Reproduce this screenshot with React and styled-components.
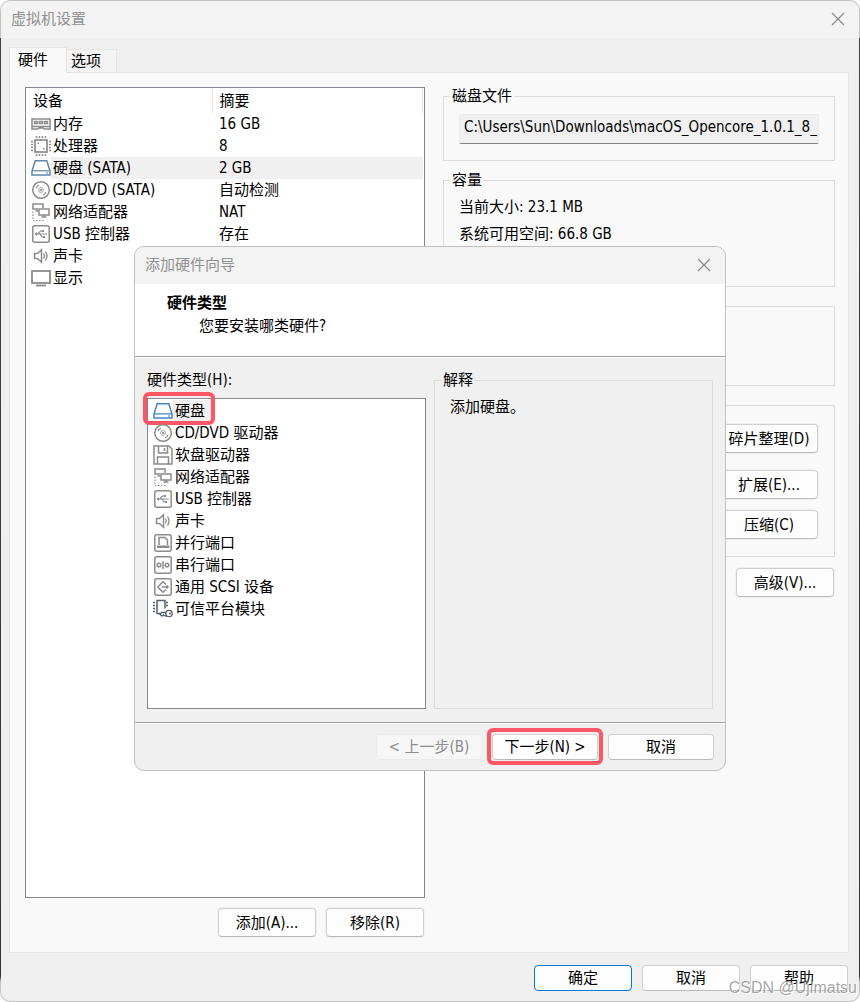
import styled, { createGlobalStyle } from "styled-components";
import { useState } from "react";

const GlobalStyle = createGlobalStyle`
  * {
    box-sizing: border-box;
  }
  body {
    margin: 0;
    background: #fff;
    color: #000;
    font-family: "DejaVu Sans Condensed", "Noto Sans CJK SC", sans-serif;
    font-size: 15px;
    line-height: 22px;
  }
  button, input, table {
    font: inherit;
    color: inherit;
  }
`;

const icons = {
  memory: (
    <>
      <path d="M1 5h18v10h-6l-1-1H8l-1 1H1zM1 12.5h18" />
      <path d="M3.500 7.500h3v2h-3zM8.500 7.500h3v2h-3zM13.500 7.500h3v2h-3z" strokeWidth="1.4" />
    </>
  ),
  cpu: (
    <>
      <rect x="4" y="4" width="12" height="12" strokeWidth="1.7" />
      <path d="M5.5 0v2M8.5 0v2M11.5 0v2M14.5 0v2M5.5 18v2M8.5 18v2M11.5 18v2M14.5 18v2M0 5.5h2M0 8.5h2M0 11.5h2M0 14.5h2M18 5.5h2M18 8.5h2M18 11.5h2M18 14.5h2" />
      <path d="M6.500 6.500h1.500v1.500H6.500zM12 12h1.500v1.500H12z" fill="currentColor" stroke="none" />
    </>
  ),
  disk: (
    <>
      <path d="M4.200 2.800h11.600l3.200 10.200v4H1v-4z" />
      <path d="M1 12.800h18" strokeWidth="1.2" />
      <path d="M15 15h2" strokeWidth="1.2" />
    </>
  ),
  cd: (
    <>
      <circle cx="10" cy="10" r="8.3" />
      <circle cx="10" cy="10" r="2.4" strokeWidth="0.8" />
      <circle cx="10" cy="10" r="1.1" fill="currentColor" stroke="none" />
      <path d="M5 8q1-2.200 3-3M15 12q-1 2.200-3 3" strokeWidth="1.3" />
    </>
  ),
  floppy: (
    <>
      <path d="M1 1h15l3 3v15H1z" />
      <path d="M5.5 1v7h9V1M4.5 19v-7h11v7M11.5 3v3" />
    </>
  ),
  network: (
    <>
      <path d="M7 7H2V2h10v4M4.5 9h3" />
      <path d="M8 7h10v6H8zM13 13v2M10.5 15h5" />
      <path d="M2 9.5v9h11" strokeWidth="1.2" strokeDasharray="1.5 1.5" />
    </>
  ),
  usb: (
    <>
      <rect x="1.8" y="1.8" width="16.4" height="16.4" rx="2" />
      <path d="M4 10h12M7 10l2.500-3h2M9 10l2 3h2" strokeWidth="1.2" />
      <path d="M6 8L3.500 10 6 12zM11 6h2v2h-2zM12 12h2v2h-2z" fill="currentColor" stroke="none" />
    </>
  ),
  sound: (
    <>
      <path d="M3.5 7.5h3l4-3.7v12.4l-4-3.7h-3z" />
      <path d="M12.5 7.5q1.6 2.5 0 5M14.5 5.5q3 4.5 0 9" strokeWidth="1.3" />
    </>
  ),
  display: (
    <>
      <rect x="1" y="3" width="18" height="12" strokeWidth="1.8" />
      <path d="M5 17.5h10" strokeWidth="1.8" />
    </>
  ),
  parallel: (
    <>
      <rect x="1.8" y="1.8" width="16.4" height="16.4" rx="2" />
      <path d="M6 12V4.5h6l2.5 2.5v5" />
      <path d="M4 12.5h12.5V15H4z" fill="currentColor" stroke="none" />
    </>
  ),
  serial: (
    <>
      <rect x="1.8" y="1.8" width="16.4" height="16.4" rx="2" />
      <circle cx="6" cy="10" r="1.8" />
      <circle cx="14" cy="10" r="1.8" />
      <path d="M10 6v8" />
    </>
  ),
  scsi: (
    <>
      <rect x="1.8" y="1.8" width="16.4" height="16.4" rx="2" />
      <path d="M13 7.5L10 4.8 4.8 10l5.2 5.2 3-2.7M9 10h6M13.5 8.5L15 10l-1.5 1.5" />
    </>
  ),
  tpm: (
    <>
      <path d="M7 14.500H4V1.500h8v8" />
      <path d="M0 3.5h2M0 6.5h2M0 9.5h2M0 12.5h2M13 3.5h2M13 6.5h2" />
      <circle cx="16" cy="14.500" r="3.2" strokeWidth="1.3" />
      <circle cx="17" cy="14.500" r="1" fill="currentColor" stroke="none" />
      <path d="M13 13.500H8.500L7 15.200l1.500 1.600h1l1-1 1 1h2" strokeWidth="1.3" />
    </>
  ),
};

const devices = [
  { icon: "memory", name: "内存", summary: "16 GB" },
  { icon: "cpu", name: "处理器", summary: "8" },
  { icon: "disk", name: "硬盘 (SATA)", summary: "2 GB", color: "#5d86a8" },
  { icon: "cd", name: "CD/DVD (SATA)", summary: "自动检测" },
  { icon: "network", name: "网络适配器", summary: "NAT" },
  { icon: "usb", name: "USB 控制器", summary: "存在" },
  { icon: "sound", name: "声卡", summary: "" },
  { icon: "display", name: "显示", summary: "" },
];

const hardwareTypes = [
  { icon: "disk", name: "硬盘", color: "#3f87c6" },
  { icon: "cd", name: "CD/DVD 驱动器" },
  { icon: "floppy", name: "软盘驱动器" },
  { icon: "network", name: "网络适配器" },
  { icon: "usb", name: "USB 控制器" },
  { icon: "sound", name: "声卡" },
  { icon: "parallel", name: "并行端口" },
  { icon: "serial", name: "串行端口" },
  { icon: "scsi", name: "通用 SCSI 设备" },
  { icon: "tpm", name: "可信平台模块", color: "#52626e" },
];

function DeviceIcon({ name, color }) {
  return (
    <Icon viewBox="0 0 20 20" $color={color} aria-hidden="true">
      {icons[name]}
    </Icon>
  );
}

function CloseButton() {
  return (
    <Close aria-label="关闭">
      <svg width="14" height="14" viewBox="0 0 14 14">
        <path d="M1 1l12 12M13 1L1 13" stroke="currentColor" strokeWidth="1.2" />
      </svg>
    </Close>
  );
}

function Wizard() {
  const [selected, setSelected] = useState(0);

  return (
    <Overlay>
      <Dialog role="dialog" aria-labelledby="wizard-title">
        <WizardTitle>
          <span id="wizard-title">添加硬件向导</span>
          <CloseButton />
        </WizardTitle>
        <Intro>
          <h2>硬件类型</h2>
          <p>您要安装哪类硬件?</p>
        </Intro>
        <WizardBody>
          <TypeColumn>
            <span id="type-label">硬件类型(H):</span>
            <TypeList role="listbox" aria-labelledby="type-label">
              {hardwareTypes.map((type, i) => (
                <TypeRow
                  key={type.name}
                  role="option"
                  aria-selected={i === selected}
                  onClick={() => setSelected(i)}
                >
                  <DeviceIcon name={type.icon} color={type.color} />
                  <TypeName $selected={i === selected}>{type.name}</TypeName>
                  {i === 0 && <TypeMark />}
                </TypeRow>
              ))}
            </TypeList>
          </TypeColumn>
          <Explain>
            <legend>解释</legend>
            <p>添加硬盘。</p>
          </Explain>
        </WizardBody>
        <WizardFooter>
          <WizardButton disabled>&lt; 上一步(B)</WizardButton>
          <Marked>
            <WizardButton>下一步(N) &gt;</WizardButton>
            <ButtonMark />
          </Marked>
          <WizardButton>取消</WizardButton>
        </WizardFooter>
      </Dialog>
    </Overlay>
  );
}

function App() {
  const [tab, setTab] = useState("硬件");

  return (
    <>
      <GlobalStyle />
      <Window>
        <TitleBar>
          <span>虚拟机设置</span>
          <CloseButton />
        </TitleBar>
        <Tabs role="tablist">
          {["硬件", "选项"].map((t) => (
            <Tab key={t} role="tab" aria-selected={tab === t} $active={tab === t} onClick={() => setTab(t)}>
              {t}
            </Tab>
          ))}
        </Tabs>
        <Panel>
          <DeviceColumn>
            <DeviceBox>
              <DeviceTable>
                <thead>
                  <tr>
                    <th>设备</th>
                    <th>摘要</th>
                  </tr>
                </thead>
                <tbody>
                  {devices.map((d, i) => (
                    <DeviceRow key={d.name} $selected={i === 2}>
                      <td>
                        <DeviceCell>
                          <DeviceIcon name={d.icon} color={d.color} />
                          <DeviceName>{d.name}</DeviceName>
                        </DeviceCell>
                      </td>
                      <td>{d.summary}</td>
                    </DeviceRow>
                  ))}
                </tbody>
              </DeviceTable>
            </DeviceBox>
            <ButtonRow>
              <Button>添加(A)...</Button>
              <Button>移除(R)</Button>
            </ButtonRow>
          </DeviceColumn>
          <Settings>
            <Group $height={74}>
              <legend id="file-label">磁盘文件</legend>
              <PathInput
                readOnly
                aria-labelledby="file-label"
                value="C:\Users\Sun\Downloads\macOS_Opencore_1.0.1_8_"
              />
            </Group>
            <Group $height={116}>
              <legend>容量</legend>
              <Stat>当前大小: 23.1 MB</Stat>
              <Stat>系统可用空间: 66.8 GB</Stat>
            </Group>
            <Box $height={80} />
            <Box $height={152}>
              <Button>碎片整理(D)</Button>
              <ButtonPair>
                <Button>扩展(E)...</Button>
                <Button>压缩(C)</Button>
              </ButtonPair>
            </Box>
            <Advanced>高级(V)...</Advanced>
          </Settings>
        </Panel>
        <Footer>
          <FooterButton $primary>确定</FooterButton>
          <FooterButton>取消</FooterButton>
          <FooterButton>帮助</FooterButton>
        </Footer>
        <Wizard />
        <Watermark>CSDN @Ujimatsu</Watermark>
      </Window>
    </>
  );
}

const Window = styled.div`
  position: relative;
  display: flex;
  flex-direction: column;
  min-height: 100vh;
  padding-bottom: 10px;
  border: 1px solid transparent;
  border-radius: 10px;
  background:
    linear-gradient(#f3f3f3 37px, #efefef 37px) padding-box,
    linear-gradient(#c4c4c4 38px, #444 38px, #333 calc(100% - 26px), #c4c4c4 calc(100% - 20px)) border-box;
`;

const TitleBar = styled.header`
  display: flex;
  align-items: center;
  justify-content: space-between;
  height: 37px;
  padding: 0 14px 2px 10px;
  color: #919191;
`;

const Close = styled.button`
  display: flex;
  padding: 0;
  border: none;
  background: none;
  color: #888;
`;

const Tabs = styled.div`
  display: flex;
  align-items: flex-end;
  height: 34px;
  padding-left: 8px;
`;

const Tab = styled.button`
  width: ${(p) => (p.$active ? "58px" : "50px")};
  height: ${(p) => (p.$active ? "26px" : "23px")};
  margin-bottom: ${(p) => (p.$active ? "-1px" : "0")};
  padding: 0 0 ${(p) => (p.$active ? "2px 8px" : "0 4px")};
  border: 1px solid #e5e5e5;
  border-bottom: none;
  border-left-width: ${(p) => (p.$active ? "1px" : "0")};
  background: ${(p) => (p.$active ? "#f9f9f9" : "#f3f3f3")};
  text-align: left;
  line-height: 22px;
  z-index: 1;
`;

const Panel = styled.main`
  display: grid;
  grid-template-columns: minmax(0, 400fr) minmax(0, 392fr);
  gap: 18px;
  flex: 1;
  margin: 0 10px 0 8px;
  padding: 14px 13px 15px 15px;
  border: 1px solid #e5e5e5;
  background: #f9f9f9;
`;

const DeviceColumn = styled.section`
  display: flex;
  flex-direction: column;
  gap: 10px;
`;

const DeviceBox = styled.div`
  flex: 1;
  padding-right: 1px;
  border: 1px solid #828790;
  background: #fff;
`;

const DeviceTable = styled.table`
  width: 100%;
  table-layout: fixed;
  border-collapse: collapse;
  th {
    height: 25px;
    padding: 0 0 0 7px;
    border-right: 1px solid #e5e5e5;
    font-weight: normal;
    text-align: left;
  }
  th:first-child {
    width: 186px;
  }
  td {
    height: 22px;
    padding: 0;
  }
  td:last-child {
    padding-left: 7px;
  }
`;

const DeviceRow = styled.tr`
  td:last-child,
  span {
    background: ${(p) => (p.$selected ? "#f0f0f0" : "transparent")};
  }
`;

const DeviceCell = styled.div`
  display: flex;
  align-items: center;
  padding-left: 5px;
`;

const DeviceName = styled.span`
  flex: 1;
  padding-left: 2px;
`;

const Icon = styled.svg`
  flex: none;
  width: 20px;
  height: 20px;
  fill: none;
  color: ${(p) => p.$color || "#8b8b8b"};
  stroke: currentColor;
  stroke-width: 1.5;
`;

const ButtonRow = styled.div`
  display: flex;
  justify-content: flex-end;
  gap: 10px;
  padding-right: 1px;
`;

const Button = styled.button`
  width: 98px;
  height: 29px;
  padding: 0;
  border: 1px solid #d0d0d0;
  border-bottom-color: #bababa;
  border-radius: 4px;
  background: #fdfdfd;
  box-shadow: 0 0 0 1px #f0f0f0;
  white-space: nowrap;
  &:disabled {
    border-color: #ebebeb;
    background: #f6f6f6;
    color: #8c8c8c;
  }
`;

const FooterButton = styled(Button)`
  height: 26px;
  border-color: ${(p) => (p.$primary ? "#0078d4" : "")};
`;

const Settings = styled.section`
  display: flex;
  flex-direction: column;
`;

const Group = styled.fieldset`
  height: ${(p) => p.$height}px;
  min-width: 0;
  margin: 0 0 10px;
  padding: 7px 15px 0;
  border: 1px solid #dcdcdc;
  legend {
    margin-left: -9px;
    padding: 0 2px;
    line-height: 18px;
  }
`;

const PathInput = styled.input`
  width: 100%;
  height: 30px;
  margin-top: 2px;
  padding: 0 0 4px 4px;
  border: 1px solid #ebebeb;
  border-bottom-color: #868686;
  border-radius: 2px;
  background: #f0f0f0;
  outline: none;
`;

const Stat = styled.p`
  margin: 0 0 5px;
`;

const Box = styled.div`
  display: flex;
  flex-direction: column;
  align-items: flex-end;
  gap: 17px;
  height: ${(p) => p.$height}px;
  margin: 9px 0 10px;
  padding: 18px 16px 0;
  border: 1px solid #dcdcdc;
`;

const ButtonPair = styled.div`
  display: flex;
  flex-direction: column;
  gap: 11px;
`;

const Advanced = styled(Button)`
  align-self: flex-end;
  margin: 1px 1px 0;
`;

const Footer = styled.footer`
  display: flex;
  justify-content: flex-end;
  gap: 10px;
  padding: 12px 11px 0;
`;

const Overlay = styled.div`
  position: absolute;
  inset: 0;
  z-index: 2;
  display: flex;
  align-items: flex-start;
  justify-content: center;
  padding-top: 245px;
`;

const Dialog = styled.section`
  width: 592px;
  max-width: 100%;
  border: 1px solid #c0c0c0;
  border-radius: 10px;
  background: #f0f0f0;
  overflow: hidden;
`;

const WizardTitle = styled(TitleBar)`
  background: #f3f3f3;
`;

const Intro = styled.div`
  height: 73px;
  padding: 8px 32px 0;
  border-bottom: 1px solid #a0a0a0;
  background: #fff;
  h2 {
    margin: 0;
    font-size: 15px;
    line-height: 22px;
  }
  p {
    margin: 1px 0 0 32px;
  }
`;

const WizardBody = styled.div`
  display: grid;
  grid-template-columns: 1fr 1fr;
  gap: 8px;
  padding: 11px 12px 13px;
  border-top: 1px solid #fff;
`;

const TypeColumn = styled.div`
  display: flex;
  flex-direction: column;
  gap: 7px;
`;

const TypeList = styled.ul`
  height: 311px;
  margin: 0;
  padding: 1px 5px;
  border: 1px solid #828790;
  background: #fff;
  list-style: none;
`;

const TypeRow = styled.li`
  position: relative;
  display: flex;
  align-items: center;
`;

const TypeName = styled.span`
  padding: 0 8px 0 2px;
  background: ${(p) => (p.$selected ? "#f0f0f0" : "transparent")};
`;

const Explain = styled.fieldset`
  min-width: 0;
  margin: 0;
  padding: 5px 15px;
  border: 1px solid #dcdcdc;
  legend {
    margin-left: -9px;
    padding: 0 2px;
  }
  p {
    margin: 0;
  }
`;

const WizardFooter = styled.div`
  display: flex;
  justify-content: flex-end;
  gap: 10px;
  height: 48px;
  padding: 11px 11px 0;
  border-top: 1px solid #a0a0a0;
  box-shadow: inset 0 1px 0 #fff;
`;

const WizardButton = styled(Button)`
  width: 106px;
  height: 26px;
`;

const Marked = styled.div`
  position: relative;
`;

const Mark = styled.i`
  position: absolute;
  border: 4px solid #ff5666;
  border-radius: 6px;
  pointer-events: none;
`;

const TypeMark = styled(Mark)`
  left: -10px;
  top: -8px;
  width: 72px;
  height: 33px;
`;

const ButtonMark = styled(Mark)`
  inset: -6px -5px;
  height: 37px;
`;

const Watermark = styled.div`
  position: absolute;
  right: 2px;
  bottom: 2px;
  z-index: 3;
  color: rgba(130, 130, 130, 0.7);
  font-family: "Liberation Sans", sans-serif;
  font-size: 16px;
  text-shadow: 1px 1px 1px #fff;
`;

export default App;
